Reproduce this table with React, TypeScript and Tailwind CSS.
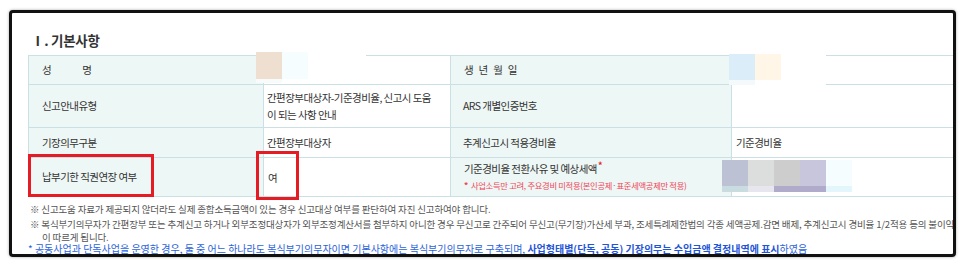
import React from "react";

const F = { fontFamily: '"Noto Sans CJK KR", "Noto Sans", sans-serif' };

function Cell({
  head,
  className = "",
  children,
}: {
  head?: boolean;
  className?: string;
  children?: React.ReactNode;
}) {
  return (
    <div
      className={`border-r border-b border-[#cae0e4] flex items-center text-[10.5px] tracking-[-0.55px] text-[#333] ${
        head ? "bg-[#edf7f5]" : "bg-white"
      } ${className}`}
    >
      {children}
    </div>
  );
}

export default function App() {
  return (
    <div className="w-[966px] h-[269px] bg-white relative" style={F}>
      <div className="absolute left-[9px] top-[10px] w-[947px] h-[247px] border-[3px] border-[#111] rounded-[4px] bg-white overflow-hidden shadow-[0_0_3px_rgba(0,0,0,0.35)]">
        <div className="pl-[16px] pt-[18px]">
          <div className="h-[19px] pl-[3px] text-[13.5px] font-bold tracking-[-0.3px] text-[#333] leading-[19px] mb-[5px]">
            Ⅰ. 기본사항
          </div>
          <div className="grid grid-cols-[235px_187px_281px_1fr] border-t border-l border-[#cae0e4]">
            {/* Row 1 */}
            <Cell head className="h-[29px] pl-[13px]">
              <span>성</span>
              <span className="ml-[31px]">명</span>
            </Cell>
            <Cell className="h-[29px]" />
            <Cell head className="h-[29px] pl-[13px]">
              <span className="tracking-[1.3px]">생 년 월 일</span>
            </Cell>
            <Cell className="h-[29px] border-r-0" />
            {/* Row 2 */}
            <Cell head className="h-[43px] pl-[13px]">
              신고안내유형
            </Cell>
            <Cell className="h-[43px] pl-[3px]">
              <div className="leading-[17px]">
                간편장부대상자-기준경비율, 신고시 도움
                <br />이 되는 사항 안내
              </div>
            </Cell>
            <Cell head className="h-[43px] pl-[12px]">
              ARS 개별인증번호
            </Cell>
            <Cell className="h-[43px] border-r-0" />
            {/* Row 3 */}
            <Cell head className="h-[30px] pl-[13px]">
              기장의무구분
            </Cell>
            <Cell className="h-[30px] pl-[3px]">간편장부대상자</Cell>
            <Cell head className="h-[30px] pl-[12px]">
              추계신고시 적용경비율
            </Cell>
            <Cell className="h-[30px] pl-[4px] border-r-0">기준경비율</Cell>
            {/* Row 4 */}
            <Cell head className="h-[39px] pl-[13px]">
              납부기한 직권연장 여부
            </Cell>
            <Cell className="h-[39px] pl-[4px]">
              <span className="mt-[2px]">여</span>
            </Cell>
            <Cell head className="h-[39px] pl-[13px]">
              <div className="flex flex-col">
                <div className="leading-[14px] mt-[-2px]">
                  기준경비율 전환사유 및 예상세액
                  <span className="text-[#e8202a] font-bold text-[9px] relative top-[-4px] ml-[1px]">*</span>
                </div>
                <div className="text-[8.3px] tracking-[-0.3px] leading-[12px] text-[#f0465a] mt-[2px]">
                  <span className="font-bold mr-[3px]">*</span>사업소득만 고려, 주요경비 미적용(본인공제·표준세액공제만 적용)
                </div>
              </div>
            </Cell>
            <Cell className="h-[39px] border-r-0" />
          </div>

          <div className="mt-[5px] pl-[2px] text-[9.5px] tracking-[-0.15px] text-[#555] whitespace-nowrap">
            <div className="h-[15px] leading-[15px]">
              ※ 신고도움 자료가 제공되지 않더라도 실제 종합소득금액이 있는 경우 신고대상 여부를 판단하여 자진 신고하여야 합니다.
            </div>
            <div className="h-[14px] leading-[14px]">
              ※ 복식부기의무자가 간편장부 또는 추계신고 하거나 외부조정대상자가 외부조정계산서를 첨부하지 아니한 경우 무신고로 간주되어 무신고(무기장)가산세 부과, 조세특례제한법의 각종 세액공제.감면 배제, 추계신고시 경비율 1/2적용 등의 불이익
            </div>
            <div className="h-[12px] leading-[12px] pl-[12px]">이 따르게 됩니다.</div>
            <div className="h-[11px] leading-[11px] text-[10px] tracking-[0px] text-[#2c63da] ml-[-2px]">
              * 공동사업과 단독사업을 운영한 경우, 둘 중 어느 하나라도 복식부기의무자이면 기본사항에는 복식부기의무자로 구축되며,{" "}
              <span className="font-bold text-[#1f55d6]">사업형태별(단독, 공동) 기장의무는 수입금액 결정내역에 표시</span>하였음
            </div>
          </div>
        </div>

        {/* Masked patches */}
        <div className="absolute left-[244px] top-[39px] w-[110px] h-[31px] bg-white">
          <div className="absolute left-0 top-0 w-[26px] h-[27px] bg-[#efdfd0]" />
          <div className="absolute left-[26px] top-0 w-[26px] h-[27px] bg-[#f5fdfe]" />
          <div className="absolute left-0 top-[27px] w-[26px] h-[4px] bg-[#f7fbfc]" />
        </div>
        <div className="absolute left-[717px] top-[40px] w-[97px] h-[32px] bg-white">
          <div className="absolute left-0 top-[1px] w-[26px] h-[26px] bg-[#dcedfa]" />
          <div className="absolute left-[26px] top-[1px] w-[26px] h-[26px] bg-[#fff6e8]" />
          <div className="absolute left-0 top-[27px] w-[26px] h-[5px] bg-[#f4f9fb]" />
        </div>
        <div className="absolute left-[710px] top-[147px] w-[130px] h-[33px]">
          <div className="flex h-[26px]">
            <div className="w-[26px] bg-[#bcc1d4]" />
            <div className="w-[26px] bg-[#dcdddd]" />
            <div className="w-[26px] bg-[#cdcdce]" />
            <div className="w-[26px] bg-[#c8c6dc]" />
            <div className="w-[26px] bg-[#f6fdff]" />
          </div>
          <div className="flex h-[6px]">
            <div className="w-[26px] bg-[#c9dce0]" />
            <div className="w-[26px] bg-[#e7e6ef]" />
            <div className="w-[52px] bg-[#b0aacb]" />
            <div className="w-[26px] bg-[#e3f6fb]" />
          </div>
        </div>

        {/* Red highlight boxes */}
        <div className="absolute left-[16px] top-[141px] w-[126px] h-[43px] border-[3px] border-[#e51c23]" />
        <div className="absolute left-[244px] top-[138px] w-[43px] h-[49px] border-[3px] border-[#e51c23]" />
      </div>
    </div>
  );
}
